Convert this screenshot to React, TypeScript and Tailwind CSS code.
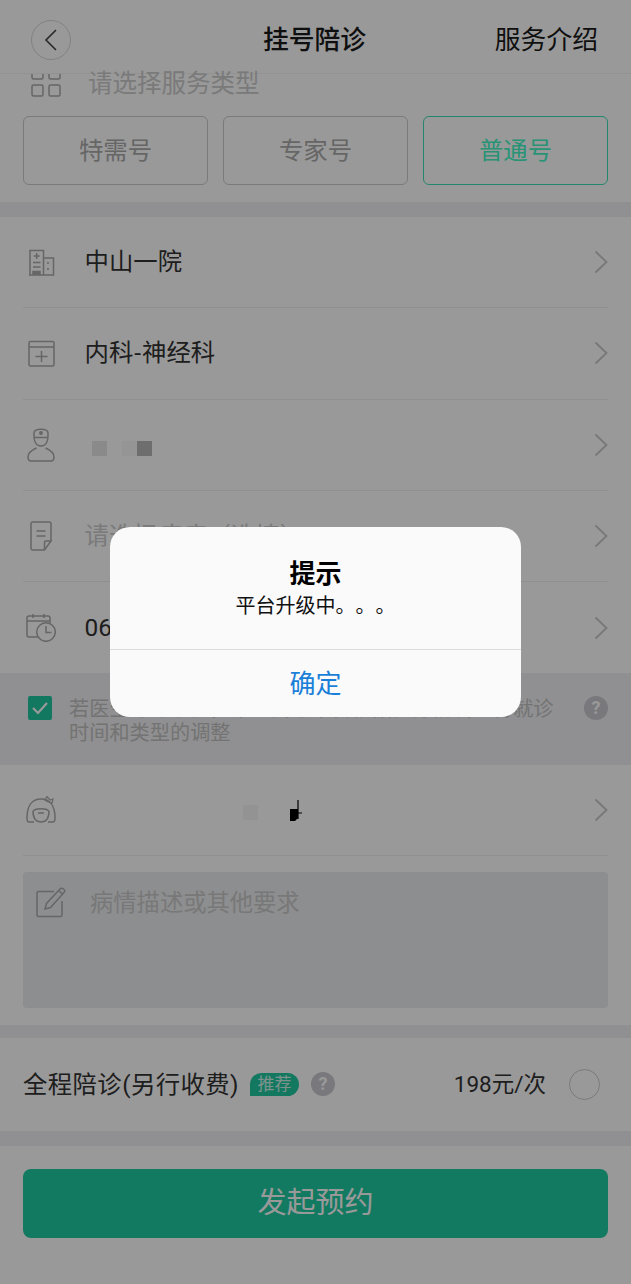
import type { ReactNode } from 'react';

function Chevron() {
  return (
    <svg width="14" height="24" viewBox="0 0 14 24" fill="none" stroke="#c8c8c8" strokeWidth="1.8" className="shrink-0">
      <path d="M1.5 1.5 12.5 12 1.5 22.5" />
    </svg>
  );
}

function Icon({ children, w = 30, h = 30 }: { children: ReactNode; w?: number; h?: number }) {
  return (
    <svg width={w} height={h} viewBox={`0 0 ${w} ${h}`} fill="none" stroke="#aaaaaa" strokeWidth="1.5" className="shrink-0">
      {children}
    </svg>
  );
}

function Row({ icon, children, last }: { icon: ReactNode; children: ReactNode; last?: boolean }) {
  return (
    <div className={`mx-[23px] flex h-[91.3px] items-center ${last ? '' : 'border-b border-[#eeeeee]'}`}>
      <div className="mr-[25.5px] flex w-[36px] shrink-0 justify-center">{icon}</div>
      <div className="min-w-0 flex-1 text-[24.4px] text-[#333333]">{children}</div>
      <Chevron />
    </div>
  );
}

function Question() {
  return (
    <div className="flex h-[24px] w-[24px] shrink-0 items-center justify-center rounded-full bg-[#c8c8d0] text-[18px] font-bold leading-none text-white">
      ?
    </div>
  );
}

export default function App() {
  return (
    <div className="relative h-[1284px] w-[631px] overflow-hidden bg-white font-['Roboto','Noto_Sans_CJK_SC',sans-serif] [text-spacing-trim:space-all]">
      <header className="grid h-[74px] grid-cols-[1fr_auto_1fr] items-center border-b border-[#f4f4f4] pl-[31px] pr-[33px] pt-[6px]">
        <div className="flex h-[40px] w-[40px] items-center justify-center rounded-full border border-[#d8d8d8]">
          <svg width="14" height="24" viewBox="0 0 14 24" fill="none" stroke="#444444" strokeWidth="1.6">
            <path d="M12 2 2 12l10 10" />
          </svg>
        </div>
        <h1 className="pt-[2px] text-[25.8px] font-medium text-[#1a1a1a]">挂号陪诊</h1>
        <div className="justify-self-end pt-[2px] text-[25.8px] text-[#1a1a1a]">服务介绍</div>
      </header>

      <div className="flex h-[42px] pl-[31px]">
        <svg width="31" height="24" viewBox="0 0 31 24" fill="none" stroke="#aaaaaa" strokeWidth="1.5" className="shrink-0">
          <rect x="1" y="-6" width="11" height="11" rx="1.5" />
          <rect x="18" y="-6" width="11" height="11" rx="1.5" />
          <rect x="1" y="11" width="11" height="11" rx="1.5" />
          <rect x="18" y="11" width="11" height="11" rx="1.5" />
        </svg>
        <span className="ml-[26px] -mt-[1px] h-[24px] text-[24.5px] leading-[22px] text-[#cccccc]">请选择服务类型</span>
      </div>

      <div className="grid grid-cols-3 gap-[15px] px-[23px] pb-[17px]">
        <div className="flex h-[69px] items-center justify-center rounded-[6px] border border-[#cccccc] pt-[2px] text-[24.4px] text-[#aaaaaa]">特需号</div>
        <div className="flex h-[69px] items-center justify-center rounded-[6px] border border-[#cccccc] pt-[2px] text-[24.4px] text-[#aaaaaa]">专家号</div>
        <div className="flex h-[69px] items-center justify-center rounded-[6px] border border-[#3fe0b8] pt-[2px] text-[24.4px] text-[#45f5c5]">普通号</div>
      </div>

      <div className="h-[15px] bg-[#f0f1f3]" />

      <Row
        icon={
          <Icon w={27} h={28}>
            <path d="M2 27V2.5h13.5V27M15.5 10H25.5V27H1" />
            <path d="M8.7 5v6M5.7 8h6M5 14.5h7.5M5 19h7.5M20 14v2M20 20v2" />
            <path d="M5 27v-3.5h7V27" fill="#aaaaaa" />
          </Icon>
        }
      >
        中山一院
      </Row>
      <Row
        icon={
          <Icon w={27} h={27}>
            <rect x="1" y="1.5" width="25" height="24.5" rx="1.5" />
            <path d="M1 7h25M13.5 11v11M7.5 16.5h12" />
          </Icon>
        }
      >
        内科<span className="mx-[1px]">-</span>神经科
      </Row>
      <Row
        icon={
          <Icon w={28} h={34}>
            <path d="M7 8V5c0-5 14-5 14 0v3c0 5-2 10-7 10S7 13 7 8ZM7 9.500h14" />
            <path d="M9.500 20C5 22 1 25 1 29c0 2 1 4 3 4h20c2 0 3-2 3-4 0-4-4-7-8.500-9" />
            <circle cx="14" cy="5" r="1.200" fill="#aaaaaa" />
          </Icon>
        }
      >
        <div className="flex items-center pl-[7.5px] pt-[8px]">
          <div className="h-[15px] w-[15px] bg-[#e6e6e6]" />
          <div className="ml-[15px] h-[15px] w-[15px] bg-[#f8f8f8]" />
          <div className="h-[15px] w-[15px] bg-[#b8b8b8]" />
        </div>
      </Row>
      <Row
        icon={
          <Icon w={24} h={30}>
            <path d="M22 20V3c0-1-1-2-2-2H4C3 1 2 2 2 3v24c0 1 1 2 2 2h11.500L22 20h-5c-1 0-1.500.7-1.500 1.500V29" />
            <path d="M7.500 10h9M7.500 15h9" />
          </Icon>
        }
      >
        <span className="text-[#cccccc]">请选择病症（选填）</span>
      </Row>
      <Row
        last
        icon={
          <Icon w={30} h={29}>
            <path d="M12 24H3c-1 0-2-1-2-2V5c0-1 1-2 2-2h19c1 0 2 1 2 2v5M1 8h23M7 1v4M18 1v4" />
            <circle cx="20" cy="19" r="9.300" />
            <path d="M20 13v6.500h5.500" />
          </Icon>
        }
      >
        06月15日
      </Row>

      <div className="flex h-[91.5px] items-start bg-[#f0f1f3] px-[23px] pt-[23px]">
        <div className="ml-[5px] flex h-[24px] w-[24px] shrink-0 items-center justify-center rounded-[2px] bg-[#1fc8a0]">
          <svg width="18" height="14" viewBox="0 0 18 14" fill="none" stroke="white" strokeWidth="2.200">
            <path d="M2 7l5 5 9-10" />
          </svg>
        </div>
        <p className="ml-[17px] w-[488px] pt-[1px] text-[20.2px] leading-[24px] text-[#c0c0c0]">
          若医生号源紧张，本人同意平台根据实际情况进行就诊时间和类型的调整
        </p>
        <div className="ml-[27px]">
          <Question />
        </div>
      </div>

      <div className="mx-[23px] flex h-[91px] items-center border-b border-[#eeeeee]">
        <div className="mr-[25.5px] flex w-[36px] shrink-0 justify-center">
          <Icon w={30} h={28}>
            <path d="M3 26C1 26 1 24 1 22 1 10 6 3 15 3s14 7 14 19c0 2 0 4-2 4h-5M3 26h5" />
            <path d="M7 15c3-3 13-3 16 0M7 15c0 7 3 11 8 11s8-4 8-11M12 17h6" />
            <path d="M19 4l2-3.500 3 3.500 3-1-1 4-5-1.500z" strokeWidth="1.200" />
          </Icon>
        </div>
        <div className="flex flex-1 items-center pt-[6px]">
          <div className="ml-[158.5px] h-[15px] w-[15px] bg-[#f5f5f5]" />
          <svg width="14" height="24" viewBox="0 0 14 24" className="ml-[31px] -mt-[6px]">
            <path d="M1 11h8v9l-3 3H1z" fill="#000000" />
            <path d="M9 2v19M3 15h10M4 21l5-5" stroke="#000000" strokeWidth="1.200" fill="none" />
          </svg>
        </div>
        <Chevron />
      </div>

      <div className="px-[23px] pb-[17px] pt-[16px]">
        <div className="flex h-[136px] items-start rounded-[4px] bg-[#ecedef] pl-[13px] pt-[14px]">
          <Icon w={31} h={32}>
            <path d="M26 15v14c0 1-.5 1.500-1.500 1.500h-22C1.500 30.500 1 30 1 29V7c0-1 .5-1.500 1.500-1.500H18" />
            <path d="M9 23l1.500-5.500L24 3c1-1 2-1 3.500 0s1.500 2.500.5 3.500L14.500 21.500zM22.500 4.500l4 3.500" />
          </Icon>
          <span className="ml-[23px] pt-[1px] text-[23.3px] leading-[32px] text-[#c8c8c8]">病情描述或其他要求</span>
        </div>
      </div>

      <div className="h-[13px] bg-[#f0f1f3]" />

      <div className="flex h-[93px] items-center pl-[23px] pr-[31px]">
        <span className="pt-[1px] text-[24.4px] tracking-[0.4px] text-[#333333]">全程陪诊(另行收费)</span>
        <span className="ml-[11px] flex h-[23px] w-[49px] items-center justify-center rounded-[12px] rounded-bl-none bg-[#1fc8a0] text-[17px] leading-none text-[#d0f4ea]">
          推荐
        </span>
        <div className="ml-[12px]">
          <Question />
        </div>
        <span className="ml-auto pt-[1px] text-[22.5px] text-[#333333]">198元/次</span>
        <div className="ml-[23px] h-[31px] w-[31px] rounded-full border border-[#cccccc]" />
      </div>

      <div className="h-[15px] bg-[#f0f1f3]" />

      <div className="px-[23px] pt-[23px]">
        <button className="flex h-[69px] w-full items-center justify-center rounded-[8px] bg-[#20cba3] text-[29px] text-white">
          发起预约
        </button>
      </div>

      <div className="absolute inset-0 flex items-center justify-center bg-black/40 pb-[40px]">
        <div className="flex h-[190px] w-[411px] flex-col rounded-[20px] bg-[#fafafa]">
          <div className="flex h-[123px] flex-col items-center border-b border-[#dcdcdc] pt-[29px]">
            <div className="text-[26px] font-bold leading-[36px] text-black">提示</div>
            <div className="text-[20px] leading-[28px] text-[#111111]">平台升级中。。。</div>
          </div>
          <div className="flex flex-1 items-center justify-center pt-[2px] text-[26px] text-[#1a7fd8]">确定</div>
        </div>
      </div>
    </div>
  );
}
